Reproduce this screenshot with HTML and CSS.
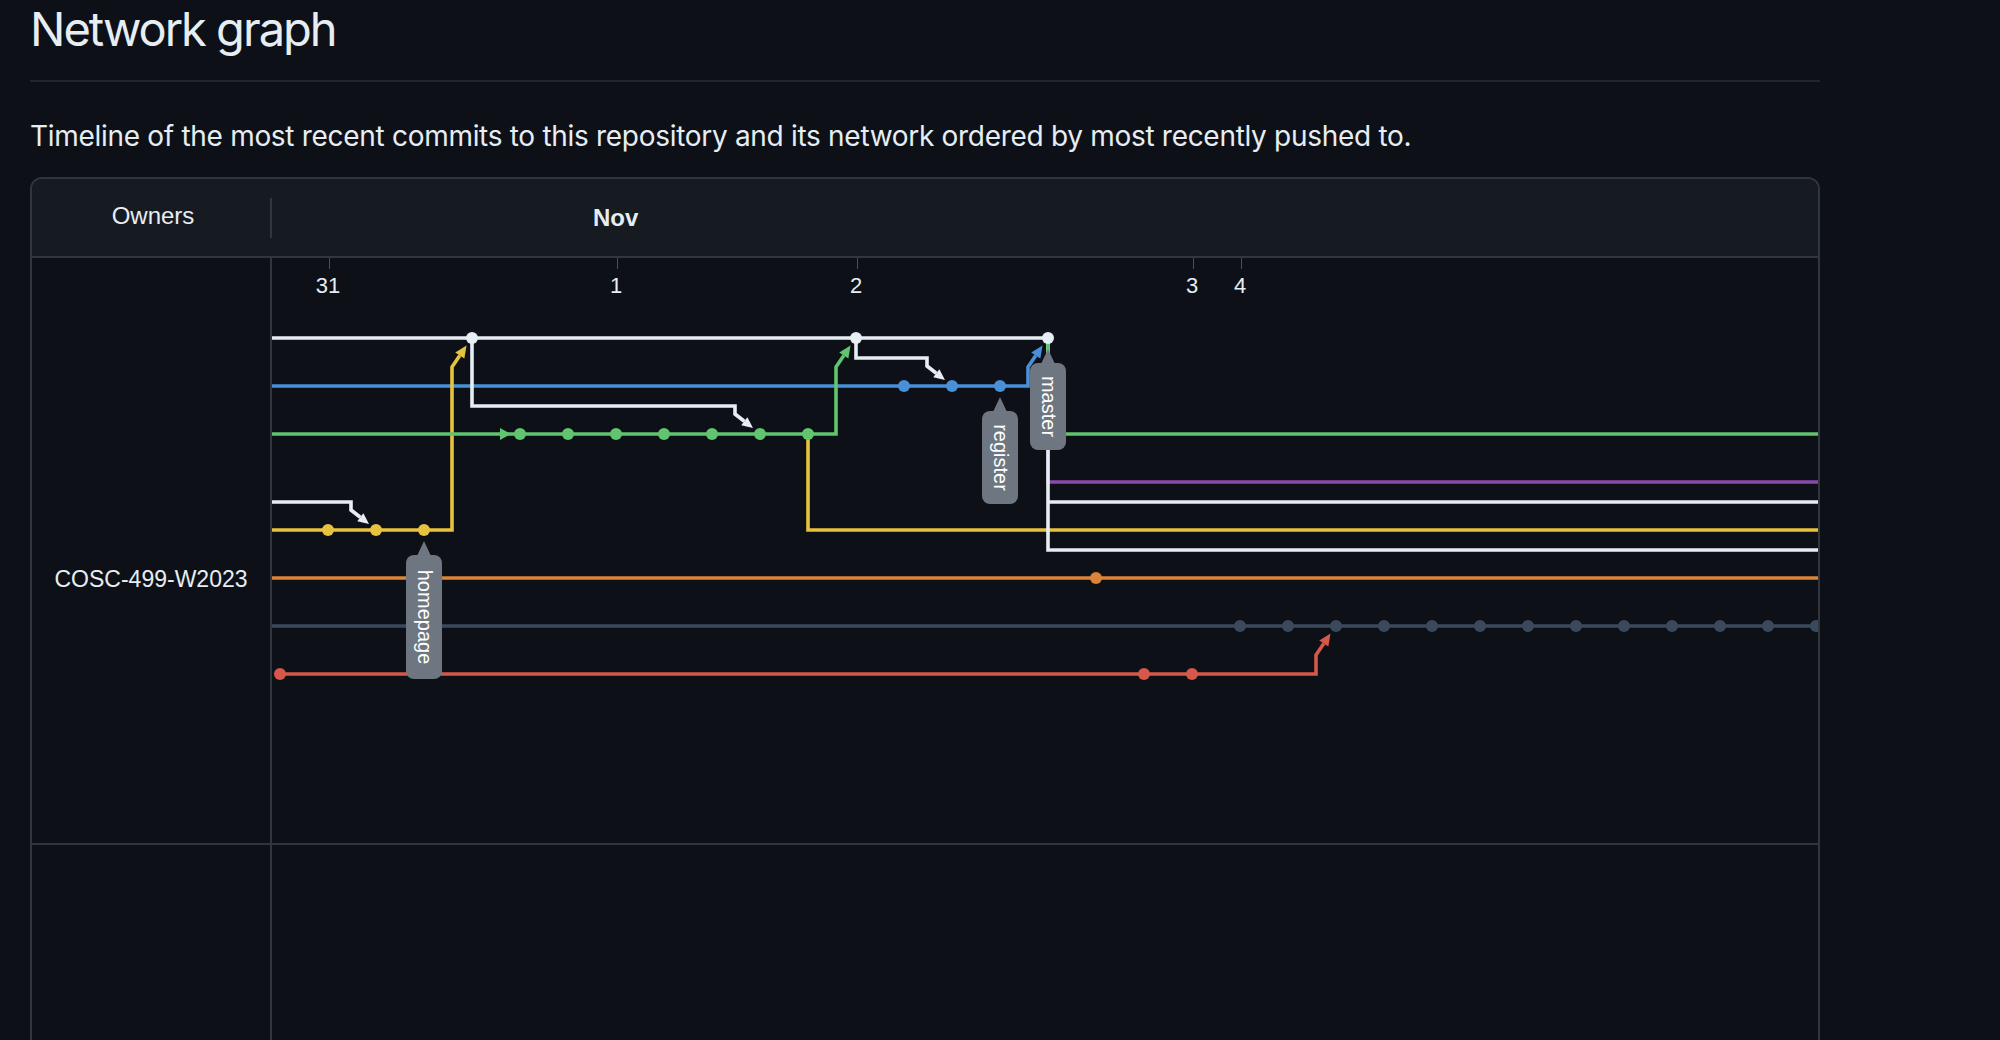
FILE: index.html
```html
<!DOCTYPE html>
<html lang="en">
<head>
<meta charset="utf-8">
<title>Network graph</title>
<link rel="stylesheet" href="styles.css">
</head>
<body>
<div class="page">
  <div class="subhead"><h2 class="subhead-title">Network graph</h2></div>
  <p class="lead">Timeline of the most recent commits to this repository and its network ordered by most recently pushed to.</p>
  <div class="network">
    <div class="net-head">
      <div class="owners-h">Owners</div>
      <div class="head-divider"></div>
      <div class="months"><span class="month">Nov</span></div>
    </div>
    <div class="net-row">
      <div class="owner-cell"><span class="owner-name">COSC-499-W2023</span></div>
      <div class="graph-cell">
        <svg class="graph" width="1546" height="585" viewBox="272 258 1546 585" xmlns="http://www.w3.org/2000/svg">
          <g class="ticks">
            <line x1="329.5" y1="258" x2="329.5" y2="269"/>
            <line x1="617.5" y1="258" x2="617.5" y2="269"/>
            <line x1="857.5" y1="258" x2="857.5" y2="269"/>
            <line x1="1193.5" y1="258" x2="1193.5" y2="269"/>
            <line x1="1241.5" y1="258" x2="1241.5" y2="269"/>
          </g>
          <g class="tick-labels">
            <text x="328" y="293">31</text>
            <text x="616" y="293">1</text>
            <text x="856" y="293">2</text>
            <text x="1192" y="293">3</text>
            <text x="1240" y="293">4</text>
          </g>

          <!-- base lanes -->
          <path class="ln c-orange" d="M272 578 H1818"/>
          <path class="ln c-gray" d="M272 626 H1818"/>
          <path class="ln c-red" d="M280 674 H1316 V655 L1323.8 643.45"/>
          <polygon class="c-red-f" points="1330.5,633.5 1328.36,646.52 1319.24,640.38"/>

          <path class="ln c-blue" d="M272 386 H1028 V367 L1035.8 355.45"/>
          <polygon class="c-blue-f" points="1042.5,345.5 1040.36,358.52 1031.24,352.38"/>

          <path class="ln c-yellow" d="M272 530 H452 V367 L459.8 355.45"/>
          <polygon class="c-yellow-f" points="466.5,345.5 464.36,358.52 455.24,352.38"/>
          <path class="ln c-yellow" d="M808 434 V530 H1818"/>

          <path class="ln c-green" d="M272 434 H836 V367 L843.8 355.45"/>
          <polygon class="c-green-f" points="500,428 511,434 500,440"/>
          <polygon class="c-green-f" points="850.5,345.5 848.36,358.52 839.24,352.38"/>

          <!-- master fan-out -->
          <path class="ln c-purple" d="M1048 338 V482 H1818"/>
          <path class="ln c-white" d="M1048 338 V550 H1818"/>
          <path class="ln c-white" d="M1048 502 H1818"/>
          <path class="ln c-green" d="M1048 338 V434 H1818"/>

          <!-- white trunk and forks -->
          <path class="ln c-white" d="M272 338 H1048"/>
          <path class="ln c-white" d="M272 502 H351 V510 L360.3 517.25"/>
          <polygon class="c-white-f" points="369,524 357.23,521.2 363.37,513.3"/>
          <path class="ln c-white" d="M472 338 V406 H735 V414 L744.3 421.25"/>
          <polygon class="c-white-f" points="753,428 741.23,425.2 747.37,417.3"/>
          <path class="ln c-white" d="M856 338 V358 H927 V366 L936.3 373.25"/>
          <polygon class="c-white-f" points="945,380 933.23,377.2 939.37,369.3"/>

          <!-- commits -->
          <g class="c-white-f">
            <circle cx="472" cy="338" r="6"/><circle cx="856" cy="338" r="6"/><circle cx="1048" cy="338" r="6"/>
          </g>
          <g class="c-blue-f">
            <circle cx="904" cy="386" r="6"/><circle cx="952" cy="386" r="6"/><circle cx="1000" cy="386" r="6"/>
          </g>
          <g class="c-green-f">
            <circle cx="520" cy="434" r="6"/><circle cx="568" cy="434" r="6"/><circle cx="616" cy="434" r="6"/>
            <circle cx="664" cy="434" r="6"/><circle cx="712" cy="434" r="6"/><circle cx="760" cy="434" r="6"/>
            <circle cx="808" cy="434" r="6"/>
          </g>
          <g class="c-yellow-f">
            <circle cx="328" cy="530" r="6"/><circle cx="376" cy="530" r="6"/><circle cx="424" cy="530" r="6"/>
          </g>
          <g class="c-orange-f">
            <circle cx="1096" cy="578" r="6"/>
          </g>
          <g class="c-gray-f">
            <circle cx="1240" cy="626" r="6"/><circle cx="1288" cy="626" r="6"/><circle cx="1336" cy="626" r="6"/>
            <circle cx="1384" cy="626" r="6"/><circle cx="1432" cy="626" r="6"/><circle cx="1480" cy="626" r="6"/>
            <circle cx="1528" cy="626" r="6"/><circle cx="1576" cy="626" r="6"/><circle cx="1624" cy="626" r="6"/>
            <circle cx="1672" cy="626" r="6"/><circle cx="1720" cy="626" r="6"/><circle cx="1768" cy="626" r="6"/>
            <circle cx="1816" cy="626" r="6"/>
          </g>
          <g class="c-red-f">
            <circle cx="280" cy="674" r="6"/><circle cx="1144" cy="674" r="6"/><circle cx="1192" cy="674" r="6"/>
          </g>

          <!-- branch labels -->
          <g class="tag">
            <polygon points="424,541 417,556 431,556"/>
            <g transform="translate(424 555) rotate(90)">
              <rect x="0" y="-18" width="124" height="36" rx="8"/>
              <text x="62" y="6">homepage</text>
            </g>
          </g>
          <g class="tag">
            <polygon points="1000,397 993,412 1007,412"/>
            <g transform="translate(1000 411) rotate(90)">
              <rect x="0" y="-18" width="93" height="36" rx="8"/>
              <text x="46.5" y="6">register</text>
            </g>
          </g>
          <g class="tag">
            <polygon points="1048,349 1041,364 1055,364"/>
            <g transform="translate(1048 363) rotate(90)">
              <rect x="0" y="-18" width="87" height="36" rx="8"/>
              <text x="43.5" y="6">master</text>
            </g>
          </g>
        </svg>
      </div>
    </div>
    <div class="net-row net-row-empty">
      <div class="owner-cell"></div>
      <div class="graph-cell"></div>
    </div>
  </div>
</div>
</body>
</html>
```

FILE: styles.css
```css
* { box-sizing: border-box; }

body {
  margin: 0;
  background: #0d1117;
  color: #e6edf3;
  font-family: Inter, "Noto Sans", sans-serif;
}

.page {
  margin-left: 30px;
  width: 1790px;
}

.subhead {
  padding-bottom: 22px;
  border-bottom: 2px solid #21262d;
}

.subhead-title {
  margin: 0;
  font-size: 47px;
  font-weight: 400;
  line-height: 58px;
  letter-spacing: -2px;
}

.lead {
  margin: 37px 0 24px;
  font-size: 28px;
  line-height: 34px;
  letter-spacing: -0.3px;
}

.network {
  border: 2px solid #30363d;
  border-radius: 12px;
  overflow: hidden;
  font-family: "Liberation Sans", Arial, sans-serif;
}

.net-head {
  display: grid;
  grid-template-columns: 238px 2px 1fr;
  align-items: center;
  height: 79px;
  background: #161b22;
  border-bottom: 2px solid #30363d;
  font-size: 24px;
}

.owners-h {
  text-align: center;
  padding: 0 0 4px 4px;
}

.head-divider {
  height: 40px;
  background: #30363d;
}

.month {
  font-weight: 700;
  margin-left: 321px;
}

.net-row {
  display: grid;
  grid-template-columns: 240px 1fr;
  height: 587px;
  border-bottom: 2px solid #30363d;
}

.net-row-empty {
  height: 400px;
  border-bottom: none;
}

.owner-cell {
  border-right: 2px solid #30363d;
  padding-top: 308px;
  text-align: center;
  font-size: 23px;
  line-height: 26px;
}

.graph { display: block; }

.ticks line { stroke: #484f58; stroke-width: 1; }
.tick-labels text {
  font-family: "Liberation Sans", Arial, sans-serif;
  font-size: 22px;
  fill: #e6edf3;
  text-anchor: middle;
}

.ln { fill: none; stroke-width: 3.6; stroke-linejoin: miter; }
.c-white { stroke: #e6edf3; }
.c-blue { stroke: #4a90d9; }
.c-green { stroke: #61c46e; }
.c-yellow { stroke: #e6c23f; }
.c-orange { stroke: #db8339; }
.c-purple { stroke: #8b4aab; }
.c-gray { stroke: #3b495d; }
.c-red { stroke: #d6584a; }

.c-white-f { fill: #e6edf3; }
.c-blue-f { fill: #4a90d9; }
.c-green-f { fill: #61c46e; }
.c-yellow-f { fill: #e6c23f; }
.c-orange-f { fill: #db8339; }
.c-gray-f { fill: #3b495d; }
.c-red-f { fill: #d6584a; }

.tag polygon, .tag rect { fill: #6e7681; }
.tag text {
  font-family: "Liberation Sans", Arial, sans-serif;
  font-size: 20px;
  fill: #ffffff;
  text-anchor: middle;
}
```
